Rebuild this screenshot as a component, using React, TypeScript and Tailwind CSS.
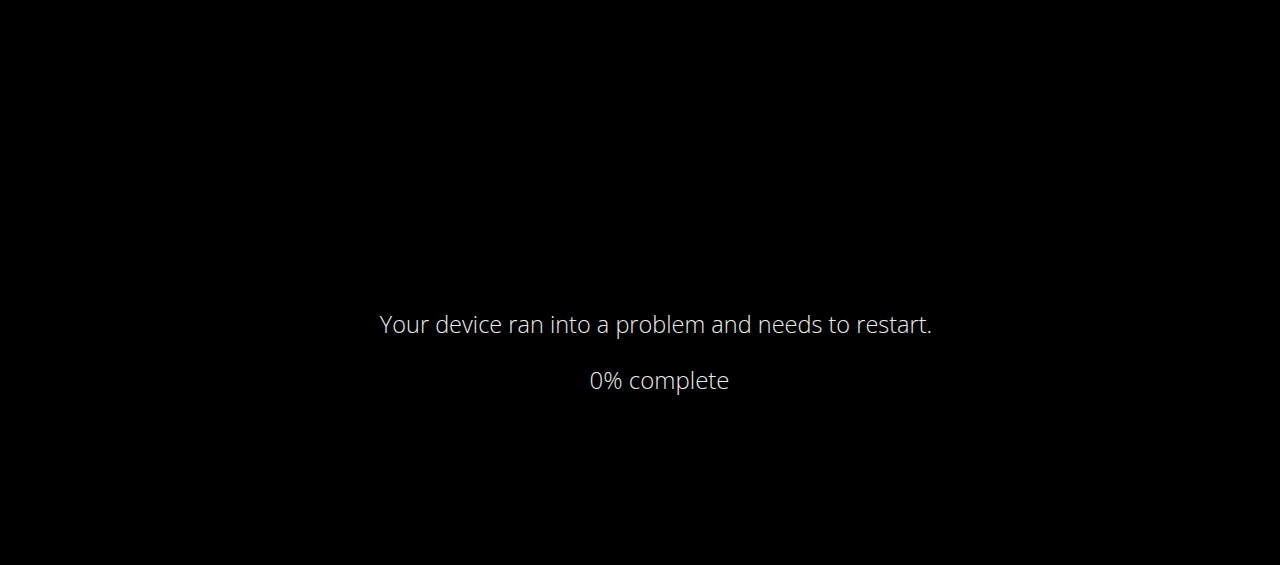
export default function App() {
  return (
    <div className="w-full h-[565px] bg-black flex flex-col items-center pt-[308px] gap-[24px] text-[#ececec] font-light" style={{ fontFamily: '"Open Sans", "Noto Sans", sans-serif' }}>
      <p className="text-[23.5px] leading-[32px] pl-[32px]">Your device ran into a problem and needs to restart.</p>
      <p className="text-[24px] leading-[32px] pl-[39px]">0% complete</p>
    </div>
  )
}
